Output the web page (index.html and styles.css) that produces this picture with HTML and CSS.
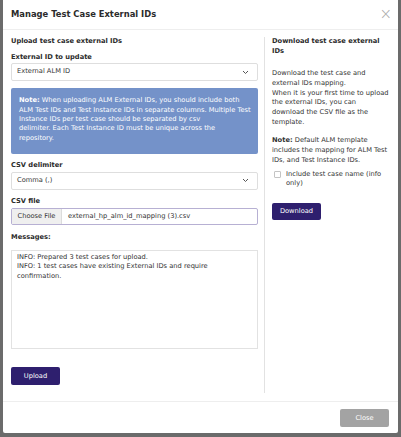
FILE: index.html
```html
<!DOCTYPE html>
<html lang="en">
<head>
    <meta charset="UTF-8">
    <title>Manage Test Case External IDs</title>
    <link rel="stylesheet" href="styles.css">
</head>
<body>
    <div class="modal">
        <div class="modal-header">
            <h1>Manage Test Case External IDs</h1>
            <span class="close">&times;</span>
        </div>
        <div class="modal-body">
            <section class="col-upload">
                <h2>Upload test case external IDs</h2>
                <label class="field-label">External ID to update</label>
                <div class="select">
                    <span>External ALM ID</span>
                    <svg width="7" height="5" viewBox="0 0 7 5"><path d="M1 1l2.5 2.5L6 1" fill="none" stroke="#555" stroke-width="1"/></svg>
                </div>
                <div class="note-box">
                    <b>Note:</b> When uploading ALM External IDs, you should include both ALM Test IDs and Test Instance IDs in separate columns. Multiple Test Instance IDs per test case should be separated by csv<br>delimiter. Each Test Instance ID must be unique across the repository.
                </div>
                <label class="field-label spaced">CSV delimiter</label>
                <div class="select">
                    <span>Comma (,)</span>
                    <svg width="7" height="5" viewBox="0 0 7 5"><path d="M1 1l2.5 2.5L6 1" fill="none" stroke="#555" stroke-width="1"/></svg>
                </div>
                <label class="field-label spaced">CSV file</label>
                <div class="file-input">
                    <span class="file-btn">Choose File</span>
                    <span class="file-name">external_hp_alm_id_mapping (3).csv</span>
                </div>
                <label class="field-label messages-label">Messages:</label>
                <div class="messages">
                    INFO: Prepared 3 test cases for upload.<br>
                    INFO: 1 test cases have existing External IDs and require confirmation.
                </div>
                <button class="btn-primary btn-upload">Upload</button>
            </section>
            <section class="col-download">
                <h2>Download test case external IDs</h2>
                <p class="text">Download the test case and external IDs mapping.<br>When it is your first time to upload the external IDs, you can download the CSV file as the template.</p>
                <p class="text note"><b>Note:</b> Default ALM template includes the mapping for ALM Test IDs, and Test Instance IDs.</p>
                <div class="check-row">
                    <span class="checkbox"></span>
                    <span>Include test case name (info only)</span>
                </div>
                <button class="btn-primary btn-download">Download</button>
            </section>
        </div>
        <div class="modal-footer">
            <button class="btn-close">Close</button>
        </div>
    </div>
</body>
</html>
```

FILE: styles.css
```css
* {
    margin: 0;
    padding: 0;
    box-sizing: border-box;
}

body {
    font-family: "DejaVu Sans", Verdana, sans-serif;
    font-size: 6.7px;
    line-height: 9.6px;
    color: #333;
    background-color: #6b6b6b;
    height: 437px;
    overflow: hidden;
}

.modal {
    margin: 0 3px;
    height: 433px;
    background-color: #ffffff;
    border-radius: 0 0 2px 2px;
    display: flex;
    flex-direction: column;
}

.modal-header {
    height: 30px;
    padding: 0 6px 0 8px;
    border-bottom: 1px solid #eeeeee;
    display: flex;
    align-items: center;
    justify-content: space-between;
}

.modal-header h1 {
    font-size: 8.4px;
    font-weight: bold;
    color: #2b2b2b;
}

.close {
    font-size: 15px;
    color: #aaa;
    font-weight: 300;
}

.modal-body {
    flex: 1;
    display: flex;
    padding: 7px 0 8px 8px;
}

.col-upload {
    width: 254px;
    padding-right: 6px;
    border-right: 1px solid #e2e2e2;
    display: flex;
    flex-direction: column;
}

.col-download {
    width: 124px;
    padding-left: 7px;
}

h2 {
    font-size: 6.7px;
    font-weight: bold;
    color: #2b2b2b;
    line-height: 9.6px;
}

.field-label {
    display: block;
    font-weight: bold;
    color: #2b2b2b;
    margin-top: 6px;
}

.field-label.spaced {
    margin-top: 7px;
}

.select {
    margin-top: 1px;
    height: 18px;
    border: 1px solid #dedede;
    border-radius: 2px;
    padding: 0 8px 0 5px;
    display: flex;
    align-items: center;
    justify-content: space-between;
}

.note-box {
    margin-top: 7px;
    background-color: #7492c9;
    color: #ffffff;
    padding: 8px 7px 11px 8px;
    border-radius: 2px;
    line-height: 9.4px;
}

.file-input {
    margin-top: 2px;
    height: 17px;
    border: 1px solid #b7b0d3;
    border-radius: 2px;
    display: flex;
    align-items: stretch;
}

.file-btn {
    width: 50px;
    background-color: #efefef;
    border-right: 1px solid #dcdcdc;
    display: flex;
    align-items: center;
    justify-content: center;
}

.file-name {
    padding-left: 6px;
    display: flex;
    align-items: center;
}

.messages-label {
    margin-top: 8px;
}

.messages {
    margin-top: 7px;
    height: 99px;
    border: 1px solid #e2e2e2;
    padding: 2px 5px;
    line-height: 9.4px;
}

.btn-primary {
    font-family: inherit;
    font-size: 6.7px;
    color: #ffffff;
    background-color: #2e1f6e;
    border: none;
    border-radius: 2px;
    height: 18px;
    width: 49px;
}

.btn-upload {
    margin-top: 18px;
}

.text {
    margin-top: 13px;
    line-height: 9.7px;
}

.text.note {
    margin-top: 9px;
}

.check-row {
    display: flex;
    align-items: flex-start;
    margin-top: 4px;
    padding-left: 2px;
}

.checkbox {
    width: 7px;
    height: 7px;
    border: 1px solid #c4c4c4;
    border-radius: 1px;
    margin: 1px 5px 0 0;
    flex-shrink: 0;
}

.btn-download {
    margin-top: 14px;
    height: 17px;
}

.modal-footer {
    height: 32px;
    border-top: 1px solid #eeeeee;
    padding: 0 9px;
    display: flex;
    align-items: center;
    justify-content: flex-end;
}

.btn-close {
    font-family: inherit;
    font-size: 6.7px;
    color: #ffffff;
    background-color: #a3a3a3;
    border: none;
    border-radius: 2px;
    height: 18px;
    width: 49px;
}
```
